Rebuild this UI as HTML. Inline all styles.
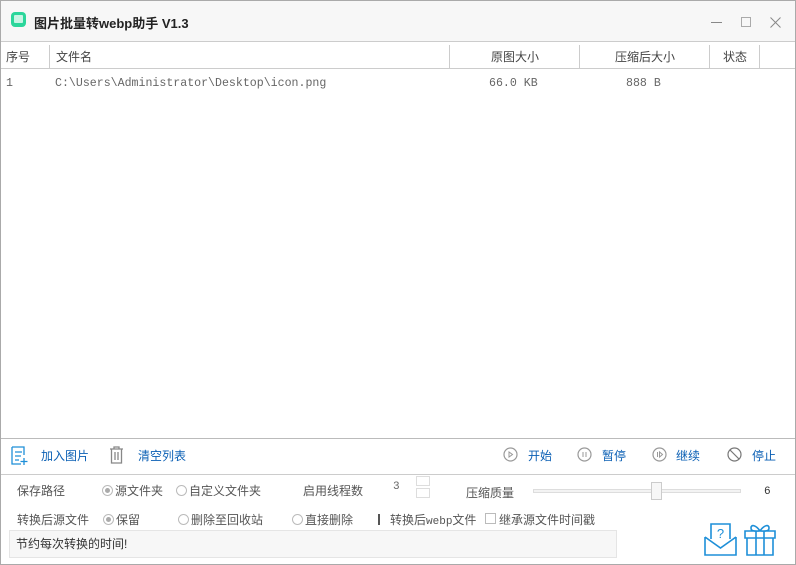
<!DOCTYPE html>
<html><head><meta charset="utf-8"><style>
*{margin:0;padding:0;box-sizing:border-box}
body{width:796px;height:565px;background:#fff;font-family:"Liberation Sans","Noto Sans CJK SC",sans-serif;font-size:12px;color:#333;position:relative;overflow:hidden}
.a{position:absolute;white-space:nowrap}
.mono{font-family:"Liberation Mono","Noto Sans CJK SC",monospace;color:#666;font-size:11.6px}
.blue{color:#0a5fb4;font-size:12px}
.rad{display:inline-block;width:11px;height:11px;border:1px solid #bbb;border-radius:50%;vertical-align:-1px;margin-right:2px;background:#fff;position:relative}
.rad.on::after{content:"";position:absolute;left:2px;top:2px;width:5px;height:5px;border-radius:50%;background:#aaa}
.gray{color:#555;font-size:12px}
</style></head><body>
<div class="a" style="left:0;top:0;width:796px;height:565px;border:1px solid #aaa"></div>
<div class="a" style="left:1px;top:1px;width:794px;height:41px;background:#f7f7f7;border-bottom:1px solid #ccc"></div>
<div class="a" style="left:11px;top:12px;width:15px;height:15px;border-radius:4px;background:#2bd69b"></div>
<div class="a" style="left:14px;top:15px;width:9px;height:8px;background:#c8f4e4;border-radius:1px"></div>
<div class="a" style="left:34px;top:13px;font-weight:bold;font-size:13px;color:#222">图片批量转webp助手 V1.3</div>
<div class="a" style="left:711px;top:22px;width:11px;height:1px;background:#888"></div>
<div class="a" style="left:741px;top:17px;width:10px;height:10px;border:1px solid #aaa"></div>
<svg class="a" style="left:770px;top:17px" width="11" height="11"><path d="M0.5 0.5l10 10M10.5 0.5l-10 10" stroke="#888"/></svg>
<!-- header -->
<div class="a" style="left:1px;top:68px;width:794px;height:1px;background:#ccc"></div>
<div class="a" style="left:49px;top:45px;width:1px;height:23px;background:#ccc"></div>
<div class="a" style="left:449px;top:45px;width:1px;height:23px;background:#ccc"></div>
<div class="a" style="left:579px;top:45px;width:1px;height:23px;background:#ccc"></div>
<div class="a" style="left:709px;top:45px;width:1px;height:23px;background:#ccc"></div>
<div class="a" style="left:759px;top:45px;width:1px;height:23px;background:#ccc"></div>
<div class="a" style="left:6px;top:48px;color:#444">序号</div>
<div class="a" style="left:56px;top:48px;color:#444">文件名</div>
<div class="a" style="left:491px;top:48px;color:#444">原图大小</div>
<div class="a" style="left:615px;top:48px;color:#444">压缩后大小</div>
<div class="a" style="left:723px;top:48px;color:#444">状态</div>
<div class="a mono" style="left:6px;top:77px">1</div>
<div class="a mono" style="left:55px;top:77px">C:\Users\Administrator\Desktop\icon.png</div>
<div class="a mono" style="left:489px;top:77px">66.0 KB</div>
<div class="a mono" style="left:626px;top:77px">888 B</div>
<!-- toolbar -->
<div class="a" style="left:1px;top:438px;width:794px;height:1px;background:#bbb"></div>
<div class="a" style="left:1px;top:474px;width:794px;height:1px;background:#ccc"></div>
<svg class="a" style="left:11px;top:446px" width="18" height="20" viewBox="0 0 18 20" fill="none" stroke="#1e8fd8" stroke-width="1.3"><path d="M1 1h12v8M1 1v17h9M4 6h7M4 10h6M4 14h4M13 12v7M9.5 15.5h7"/></svg>
<div class="a blue" style="left:41px;top:447px">加入图片</div>
<svg class="a" style="left:109px;top:446px" width="15" height="18" viewBox="0 0 15 18" fill="none" stroke="#888" stroke-width="1.3"><path d="M1 3h13M5 3V1h5v2M2.5 3v14h10V3M6 6v8M9 6v8"/></svg>
<div class="a blue" style="left:138px;top:447px">清空列表</div>
<svg class="a" style="left:503px;top:447px" width="15" height="15"><circle cx="7.5" cy="7.5" r="6.5" fill="none" stroke="#999" stroke-width="1.2"/><path d="M6 5v5l3.5-2.5z" fill="none" stroke="#999"/></svg>
<div class="a blue" style="left:528px;top:447px">开始</div>
<svg class="a" style="left:577px;top:447px" width="15" height="15"><circle cx="7.5" cy="7.5" r="6.5" fill="none" stroke="#999" stroke-width="1.2"/><path d="M6 5v5M9 5v5" stroke="#999"/></svg>
<div class="a blue" style="left:602px;top:447px">暂停</div>
<svg class="a" style="left:652px;top:447px" width="15" height="15"><circle cx="7.5" cy="7.5" r="6.5" fill="none" stroke="#999" stroke-width="1.2"/><path d="M5.5 5v5M7.5 5v5l3-2.5z" fill="none" stroke="#999"/></svg>
<div class="a blue" style="left:676px;top:447px">继续</div>
<svg class="a" style="left:727px;top:447px" width="15" height="15"><circle cx="7.5" cy="7.5" r="6.5" fill="none" stroke="#777" stroke-width="1.2"/><path d="M3 3l9 9" stroke="#777" stroke-width="1.2"/></svg>
<div class="a blue" style="left:752px;top:447px">停止</div>
<!-- options -->
<div class="a gray" style="left:17px;top:482px">保存路径</div>
<div class="a gray" style="left:102px;top:482px"><span class="rad on"></span>源文件夹</div>
<div class="a gray" style="left:176px;top:482px"><span class="rad"></span>自定义文件夹</div>
<div class="a gray" style="left:303px;top:482px">启用线程数</div>
<div class="a mono" style="left:393px;top:481px;font-size:11px">3</div>
<div class="a" style="left:416px;top:476px;width:14px;height:10px;border:1px solid #ddd"></div>
<div class="a" style="left:416px;top:488px;width:14px;height:10px;border:1px solid #ddd"></div>
<div class="a gray" style="left:466px;top:484px">压缩质量</div>
<div class="a" style="left:533px;top:489px;width:208px;height:4px;border:1px solid #ddd;background:#f3f3f3"></div>
<div class="a" style="left:651px;top:482px;width:11px;height:18px;border:1px solid #ccc;background:#f7f7f7"></div>
<div class="a mono" style="left:764px;top:486px;font-size:11px;color:#333">6</div>
<div class="a gray" style="left:17px;top:511px">转换后源文件</div>
<div class="a gray" style="left:103px;top:511px"><span class="rad on"></span>保留</div>
<div class="a gray" style="left:178px;top:511px"><span class="rad"></span>删除至回收站</div>
<div class="a gray" style="left:292px;top:511px"><span class="rad"></span>直接删除</div>
<div class="a" style="left:378px;top:514px;width:2px;height:11px;background:#555"></div>
<div class="a gray" style="left:390px;top:511px">转换后<span style="font-family:'Liberation Mono',monospace;font-size:11px">webp</span>文件</div>
<div class="a" style="left:485px;top:513px;width:11px;height:11px;border:1px solid #bbb"></div>
<div class="a gray" style="left:499px;top:511px">继承源文件时间戳</div>
<div class="a" style="left:9px;top:530px;width:608px;height:28px;background:#f7f7f7;border:1px solid #e5e5e5"></div>
<div class="a" style="left:16px;top:535px;color:#333">节约每次转换的时间!</div>
<svg class="a" style="left:704px;top:522px" width="33" height="34" viewBox="0 0 33 34" fill="none" stroke="#1e8fd8" stroke-width="1.6"><path d="M7 17V2h19v15M1 15v18h31V15M1 15l15.5 11L32 15"/><text x="16.5" y="16" font-size="13" fill="#1e8fd8" stroke="none" text-anchor="middle" font-family="Liberation Sans">?</text></svg>
<svg class="a" style="left:743px;top:522px" width="34" height="34" viewBox="0 0 34 34" fill="none" stroke="#1e8fd8" stroke-width="1.6"><path d="M2 9h30v7H2zM4 16v17h26V16M13 9v24M21 9v24M17 9c-4-6-9-7-9-3s5 3 9 3c4 0 9 1 9-3s-5-3-9 3"/></svg>
</body></html>
